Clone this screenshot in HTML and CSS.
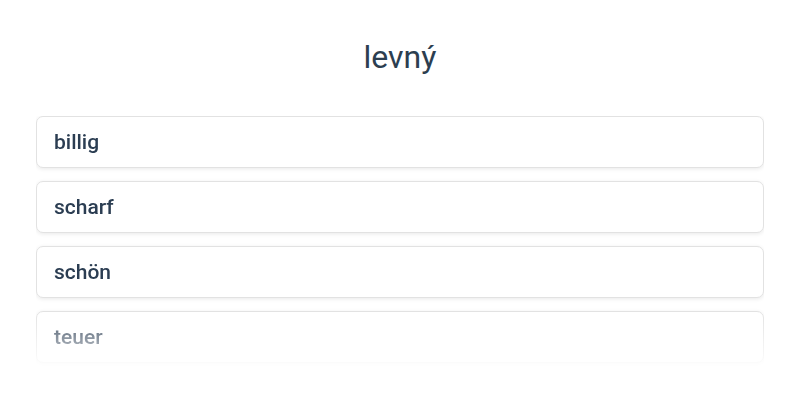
FILE: index.html
```html
<!DOCTYPE html>
<html lang="cs">
<head>
    <meta charset="UTF-8">
    <meta name="viewport" content="width=device-width, initial-scale=1.0">
    <title>levný</title>
    <link rel="stylesheet" href="styles.css">
</head>
<body>
    <div class="quiz">
        <h1 class="word">levný</h1>
        <div class="options">
            <button class="option">billig</button>
            <button class="option">scharf</button>
            <button class="option">schön</button>
            <button class="option">teuer</button>
        </div>
    </div>
</body>
</html>
```

FILE: styles.css
```css
body {
    margin: 0;
    background: #ffffff;
    font-family: Roboto, "Noto Sans", Arial, sans-serif;
    color: #2c3e50;
}
.quiz {
    padding: 38px 36px 0;
}
.word {
    margin: 0 0 40px;
    font-size: 32px;
    font-weight: 400;
    line-height: 38px;
    text-align: center;
}
.options {
    display: flex;
    flex-direction: column;
    gap: 13px;
    height: 252px;
    overflow: hidden;
    padding: 0 0 4px;
    -webkit-mask-image: linear-gradient(to bottom, #000 76%, transparent 100%);
    mask-image: linear-gradient(to bottom, #000 76%, transparent 100%);
}
.option {
    flex: none;
    height: 52px;
    padding: 0 17px;
    border: 1px solid #e2e2e2;
    border-radius: 7px;
    background: #fff;
    box-shadow: 0 1px 4px rgba(0,0,0,0.09);
    font-family: inherit;
    font-size: 21px;
    font-weight: 500;
    color: #2b3d52;
    text-align: left;
    cursor: pointer;
}
```
